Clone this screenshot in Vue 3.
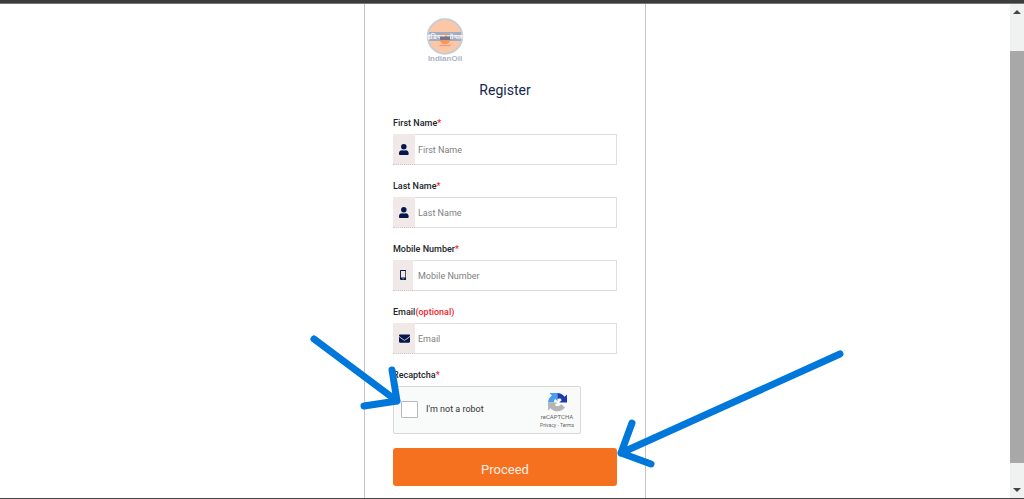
<template>
  <div class="screen">
    <div class="top-edge"></div>
    <div class="viewport">
      <main class="page">
        <form class="card" @submit.prevent>
          <svg class="logo" viewBox="0 0 38 46" role="img" aria-label="IndianOil">
            <circle cx="19" cy="18.5" r="17.3" fill="#fcc7a6" stroke="#c5ccd6" stroke-width="1.8" />
            <rect x="3" y="14" width="32" height="9" fill="#a3adc0" />
            <circle cx="19" cy="21" r="5.3" fill="#f5965a" />
            <text class="logo-hindi" x="19" y="21" text-anchor="middle">इंडियनऑयल</text>
            <rect x="14" y="18.5" width="10" height="3.5" fill="#6f7890" />
            <rect x="13.5" y="26.8" width="11" height="1.4" fill="#f39a86" />
            <text class="logo-name" x="19" y="42.5" text-anchor="middle">IndianOil</text>
          </svg>

          <h1>Register</h1>

          <div v-for="field in fields" :key="field.id" class="field">
            <label :for="field.id">{{ field.label }}<span>{{ field.mark }}</span></label>
            <div class="input-row">
              <span class="icon" :class="field.icon">
                <svg v-if="field.icon === 'user'" viewBox="0 0 448 512">
                  <path d="M224 256a128 128 0 1 0 0-256 128 128 0 0 0 0 256zm90 32h-17a174 174 0 0 1-146 0h-17C60 288 0 348 0 422v42c0 27 21 48 48 48h352c27 0 48-21 48-48v-42c0-74-60-134-134-134z" />
                </svg>
                <svg v-else-if="field.icon === 'mobile'" viewBox="0 0 320 512">
                  <path fill-rule="evenodd" d="M272 0H48C21 0 0 21 0 48v416c0 27 21 48 48 48h224c27 0 48-21 48-48V48c0-27-21-48-48-48zM160 480a32 32 0 1 1 0-64 32 32 0 0 1 0 64zm112-108c0 7-5 12-12 12H60c-7 0-12-5-12-12V60c0-7 5-12 12-12h200c7 0 12 5 12 12z" />
                </svg>
                <svg v-else viewBox="0 0 512 512">
                  <path d="M502 191c4-3 10 0 10 5v204c0 27-21 48-48 48H48c-27 0-48-21-48-48V196c0-5 6-8 10-5 22 17 52 40 154 114 21 15 57 48 92 47 35 1 72-32 92-47 102-74 132-97 154-114zM256 320c23 0 57-29 73-41 133-97 143-105 173-128 6-5 10-12 10-19v-20c0-27-21-48-48-48H48C21 64 0 85 0 112v20c0 7 4 14 10 19 30 23 40 31 173 128 16 12 50 41 73 41z" />
                </svg>
              </span>
              <input :id="field.id" v-model="form[field.id]" :class="field.icon" :type="field.type" :placeholder="field.label">
            </div>
          </div>

          <div class="captcha-field">
            <p class="captcha-title">Recaptcha<span>*</span></p>
            <div class="captcha">
              <input id="robot" v-model="form.robot" type="checkbox">
              <label for="robot">I'm not a robot</label>
              <div class="captcha-brand">
                <svg viewBox="0 0 64 64">
                  <path fill="#1c3aa9" d="M64 32V5l-8 8A32 32 0 0 0 31 0v20l10-2c2 2 4 4 5 6l-8 8z" />
                  <path fill="#4a9cec" d="M32 0H5l8 8A32 32 0 0 0 0 32h20c0-6 1-9 4-12l8 7z" />
                  <path fill="#b5b5b5" d="M0 32v27l8-8a32 32 0 0 0 49-2L44 37c-4 8-14 10-21 3l8-8z" />
                </svg>
                <span class="brand-name">reCAPTCHA</span>
                <span class="brand-links"><a href="#">Privacy</a> - <a href="#">Terms</a></span>
              </div>
            </div>
          </div>

          <button class="proceed" type="submit">Proceed</button>

          <svg class="arrows" viewBox="0 0 560 150" aria-hidden="true">
            <path d="M24 19L107 81M102 50L107 81L74 86" />
            <path d="M550 34L331 133M342 103L331 133L361 144" />
          </svg>
        </form>
      </main>

      <div class="scrollbar">
        <svg viewBox="0 0 8 4"><path d="M0 4L4 0L8 4z" /></svg>
        <div class="thumb"></div>
        <svg viewBox="0 0 8 4"><path d="M0 0L4 4L8 0z" /></svg>
      </div>
    </div>
    <div class="bottom-edge"></div>
  </div>
</template>

<script setup>
import { reactive } from 'vue'

const fields = [
  { id: 'firstName', label: 'First Name', mark: '*', icon: 'user', type: 'text' },
  { id: 'lastName', label: 'Last Name', mark: '*', icon: 'user', type: 'text' },
  { id: 'mobile', label: 'Mobile Number', mark: '*', icon: 'mobile', type: 'tel' },
  { id: 'email', label: 'Email', mark: '(optional)', icon: 'mail', type: 'email' },
]

const form = reactive({
  firstName: '',
  lastName: '',
  mobile: '',
  email: '',
  robot: false,
})
</script>

<style>
body {
  margin: 0;
  background: #ffffff;
}
</style>

<style scoped>
* {
  box-sizing: border-box;
}

.screen {
  display: flex;
  flex-direction: column;
  min-height: 100vh;
  overflow: hidden;
  font-family: Roboto, "Noto Sans", sans-serif;
  color: #212529;
}

.top-edge {
  height: 4px;
  background: #3c3c3c;
  border-bottom: 1px solid #777777;
}

.bottom-edge {
  height: 1px;
  background: #444444;
}

.viewport {
  flex: 1;
  display: flex;
}

.page {
  flex: 1;
  display: flex;
  justify-content: center;
}

.card {
  position: relative;
  width: 100%;
  max-width: 282px;
  padding: 14px 28px 12px;
  border: 1px solid #c4c4c4;
  border-width: 0 1px;
}

.logo {
  display: block;
  width: 38px;
  height: 46px;
  margin-left: 33px;
}

.logo-hindi {
  font-family: "Noto Sans", sans-serif;
  font-size: 7px;
  font-weight: 700;
  fill: #f4f5f8;
}

.logo-name {
  font-family: "Liberation Sans", Arial, sans-serif;
  font-size: 8px;
  font-weight: 700;
  fill: #a9b3c4;
}

h1 {
  margin: 16px 0 18px;
  font-size: 14px;
  font-weight: 400;
  line-height: 20px;
  text-align: center;
  color: #14274f;
}

.field {
  margin-bottom: 16px;
}

.field label,
.captcha-title {
  display: block;
  margin: 0 0 6px;
  font-size: 9px;
  font-weight: 500;
  line-height: 10px;
}

.field label span,
.captcha-title span {
  color: #f5222d;
}

.input-row {
  display: flex;
  height: 31px;
}

.icon {
  display: flex;
  align-items: center;
  justify-content: center;
  width: 22px;
  border-bottom: 1px dotted #cfc8c8;
  background: #f1e8e8;
}

.icon.mobile {
  width: 20px;
}

.icon svg {
  height: 11px;
  fill: #06184b;
}

.icon.mobile svg {
  height: 10px;
}

.input-row input {
  flex: 1;
  min-width: 0;
  padding: 0 3px;
  border: 1px solid #dedede;
  border-left: 0;
  outline: none;
  background: #ffffff;
  font-family: inherit;
  font-size: 9px;
  color: #212529;
}

.input-row input.mobile {
  padding-left: 5px;
}

.input-row input::placeholder {
  color: #808080;
}

.captcha {
  display: flex;
  align-items: center;
  width: 188px;
  height: 48px;
  padding: 0 6px 2px 7px;
  border: 1px solid #d8d8d8;
  border-radius: 2px;
  background: #f9fafa;
}

.captcha input {
  appearance: none;
  width: 17px;
  height: 17px;
  margin: 0 8px 0 0;
  border: 1px solid #b8b8bc;
  border-radius: 1px;
  background: #ffffff;
}

.captcha input:checked {
  background: #0078db;
}

.captcha label {
  flex: 1;
  font-size: 9px;
  color: #333333;
}

.captcha-brand {
  display: flex;
  flex-direction: column;
  align-items: center;
  padding-top: 2px;
  color: #666666;
}

.captcha-brand svg {
  width: 19px;
  height: 19px;
}

.brand-name {
  font-size: 6px;
  line-height: 10px;
}

.brand-links {
  font-size: 5px;
  line-height: 6px;
}

.brand-links a {
  color: inherit;
  text-decoration: none;
}

.proceed {
  display: block;
  width: 100%;
  height: 38px;
  margin-top: 14px;
  padding: 4px 0 0;
  border: 0;
  border-radius: 3px;
  background: #f57120;
  font-family: inherit;
  font-size: 13px;
  color: #fdeee4;
  cursor: pointer;
}

/* hand-drawn pointers lying over the form */
.arrows {
  position: absolute;
  left: -75px;
  bottom: 28px;
  width: 560px;
  height: 150px;
  overflow: visible;
  fill: none;
  stroke: #0078db;
  stroke-width: 7;
  stroke-linecap: round;
  stroke-linejoin: round;
  pointer-events: none;
}

.scrollbar {
  display: flex;
  flex-direction: column;
  align-items: center;
  width: 14px;
  padding: 6px 0;
  background: #f0f2f2;
}

.scrollbar svg {
  width: 8px;
  height: 4px;
  fill: #444444;
}

.thumb {
  flex: 1;
  width: 100%;
  margin: 37px 0 25px;
  background: #a8a8a8;
}
</style>
